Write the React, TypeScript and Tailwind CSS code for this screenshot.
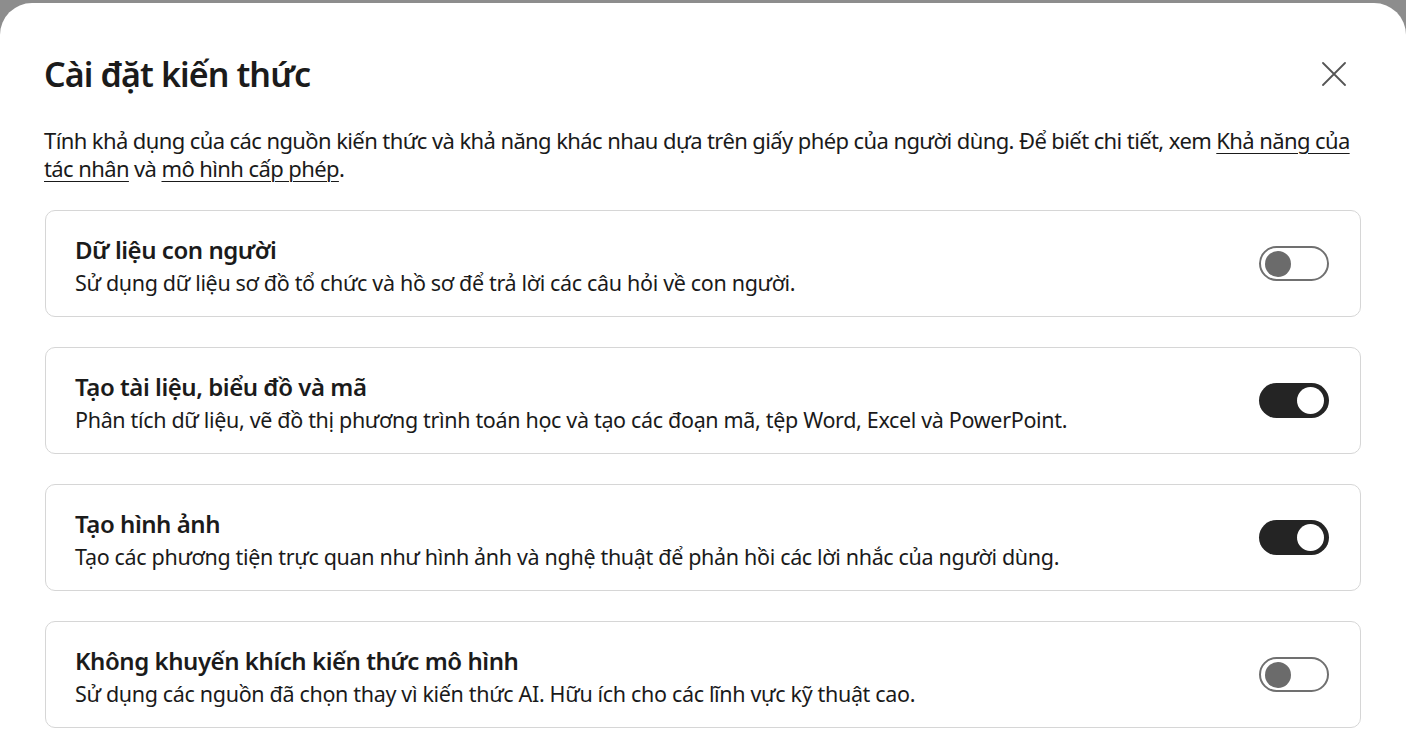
import React from 'react';

type Item = { title: string; desc: string; on: boolean };

const items: Item[] = [
  {
    title: 'Dữ liệu con người',
    desc: 'Sử dụng dữ liệu sơ đồ tổ chức và hồ sơ để trả lời các câu hỏi về con người.',
    on: false,
  },
  {
    title: 'Tạo tài liệu, biểu đồ và mã',
    desc: 'Phân tích dữ liệu, vẽ đồ thị phương trình toán học và tạo các đoạn mã, tệp Word, Excel và PowerPoint.',
    on: true,
  },
  {
    title: 'Tạo hình ảnh',
    desc: 'Tạo các phương tiện trực quan như hình ảnh và nghệ thuật để phản hồi các lời nhắc của người dùng.',
    on: true,
  },
  {
    title: 'Không khuyến khích kiến thức mô hình',
    desc: 'Sử dụng các nguồn đã chọn thay vì kiến thức AI. Hữu ích cho các lĩnh vực kỹ thuật cao.',
    on: false,
  },
];

const Toggle: React.FC<{ on: boolean }> = ({ on }) =>
  on ? (
    <div className="w-[70px] h-[35px] rounded-full bg-[#242424] flex items-center justify-end pr-[5px] shrink-0">
      <div className="w-[27px] h-[27px] rounded-full bg-white" />
    </div>
  ) : (
    <div className="w-[70px] h-[35px] rounded-full border-2 border-[#707070] bg-white flex items-center pl-[4px] shrink-0">
      <div className="w-[26px] h-[26px] rounded-full bg-[#6b6b6b]" />
    </div>
  );

export default function App() {
  return (
    <div className="h-screen overflow-hidden bg-[#8d8d8d] pt-[3px]" style={{ fontFamily: '"Noto Sans", "Open Sans", sans-serif' }}>
      <div className="h-full bg-white rounded-t-[32px] px-[44px] pt-[49px] text-[#1a1a1a]">
        <div className="flex items-center justify-between">
          <h1 className="text-[34px] leading-[44px] font-semibold tracking-[-0.9px] text-[#1b1b1b]">Cài đặt kiến thức</h1>
          <button className="mr-[16px] text-[#555]" aria-label="Đóng">
            <svg width="24" height="24" viewBox="0 0 24 24" fill="none" stroke="currentColor" strokeWidth="1.8" strokeLinecap="round">
              <path d="M1 1 L23 23 M23 1 L1 23" />
            </svg>
          </button>
        </div>

        <p className="mt-[30px] text-[22px] leading-[28px] tracking-[-0.6px]">
          Tính khả dụng của các nguồn kiến thức và khả năng khác nhau dựa trên giấy phép của người dùng. Để biết chi tiết, xem{' '}
          <a className="underline underline-offset-[4px] decoration-1">Khả năng của tác nhân</a> và{' '}
          <a className="underline underline-offset-[4px] decoration-1">mô hình cấp phép</a>.
        </p>

        <div className="mt-[28px] flex flex-col gap-[30px]">
          {items.map((it) => (
            <div
              key={it.title}
              className="mx-px h-[107px] rounded-[10px] border-[1.5px] border-[#d6d6d6] flex items-center justify-between pl-[29px] pr-[31px]"
            >
              <div className="pt-[4px]">
                <div className="text-[24px] leading-[32px] font-semibold tracking-[-0.45px] text-[#1b1b1b]">{it.title}</div>
                <div className="mt-[2px] text-[21.5px] leading-[30px] tracking-[-0.33px]">{it.desc}</div>
              </div>
              <Toggle on={it.on} />
            </div>
          ))}
        </div>
      </div>
    </div>
  );
}
